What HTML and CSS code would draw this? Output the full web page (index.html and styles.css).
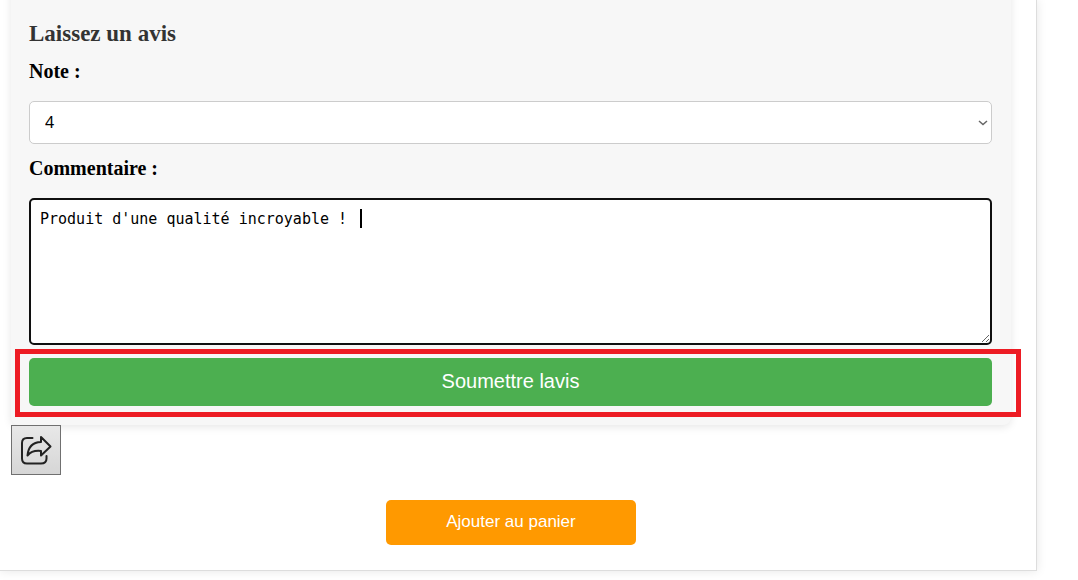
FILE: index.html
```html
<!DOCTYPE html>
<html lang="fr">
<head>
<meta charset="utf-8">
<title>Laissez un avis</title>
<link rel="stylesheet" href="styles.css">
</head>
<body>
<main class="product">
  <form class="review">
    <h2 class="review-title">Laissez un avis</h2>
    <label class="review-label" for="note">Note :</label>
    <div class="select-field">
      <select class="review-select" id="note">
        <option>1</option>
        <option>2</option>
        <option>3</option>
        <option selected>4</option>
        <option>5</option>
      </select>
      <svg class="select-arrow" viewBox="0 0 10 6" aria-hidden="true"><path d="M1 1l4 3.500 4-3.500"/></svg>
    </div>
    <label class="review-label" for="commentaire">Commentaire :</label>
    <div class="comment-field">
      <textarea class="review-comment" id="commentaire" spellcheck="false">Produit d'une qualité incroyable ! </textarea>
      <span class="caret"></span>
    </div>
    <div class="submit-field">
      <button class="submit-button" type="button">Soumettre lavis</button>
      <span class="highlight"></span>
    </div>
  </form>
  <button class="share-button" type="button" aria-label="Partager">
    <svg class="share-icon" viewBox="0 0 48 48" aria-hidden="true">
      <path d="M20.500 12H15Q10 12 10 17V32.500Q10 37.500 15 37.500H29Q34.500 37.500 34.500 32.500V30"/>
      <path d="M29 11L38.500 20.500L29 29.500V25Q20 24 15.500 29.500Q16.500 16.500 29 16Z"/>
    </svg>
  </button>
  <button class="cart-button" type="button">Ajouter au panier</button>
</main>
</body>
</html>
```
FILE: styles.css
```css
* {
  box-sizing: border-box;
}

body {
  margin: 0;
  min-height: 100vh;
  background: #fff;
  font-family: "Liberation Serif", "Times New Roman", serif;
  overflow: hidden;
}

.product {
  display: flex;
  flex-direction: column;
  margin-right: 41px;
  padding: 0 25px 25px 11px;
  border: solid #ddd;
  border-width: 0 1px 1px 0;
  box-shadow: 0 0 10px rgba(0, 0, 0, 0.1);
}

.review {
  display: flex;
  flex-direction: column;
  margin-top: -20px;
  padding: 40px 19px 19px 18px;
  background: #f7f7f7;
  border-radius: 8px;
  box-shadow: 0 2px 8px rgba(0, 0, 0, 0.1);
}

.review-title {
  margin: 0 0 12px;
  font-size: 23px;
  line-height: 28px;
  color: #333;
}

.review-label {
  margin-bottom: 18px;
  font-size: 20px;
  font-weight: bold;
  line-height: 23px;
  color: #000;
}

.select-field {
  position: relative;
  margin-bottom: 13px;
}

.review-select {
  display: block;
  width: 100%;
  height: 43px;
  padding: 0 15px 2px;
  border: 1px solid #ccc;
  border-radius: 5px;
  background: #fff;
  color: #000;
  font: 16px "Noto Sans", sans-serif;
  appearance: none;
}

.select-arrow {
  position: absolute;
  top: 19px;
  right: 4px;
  width: 10px;
  height: 6px;
  fill: none;
  stroke: #666;
  stroke-width: 1.5;
  pointer-events: none;
}

.comment-field {
  position: relative;
  margin-bottom: 13px;
}

.review-comment {
  display: block;
  width: 100%;
  height: 147px;
  padding: 9px;
  border: 2px solid #101010;
  border-radius: 5px;
  outline: none;
  background: #fff;
  color: #000;
  font: 15px/20px "DejaVu Sans Mono", monospace;
  resize: vertical;
}

.caret {
  position: absolute;
  top: 11px;
  left: 331px;
  width: 2px;
  height: 19px;
  background: #000;
}

.submit-field {
  position: relative;
}

.submit-button {
  display: block;
  width: 100%;
  height: 48px;
  padding: 0 0 2px;
  border: 0;
  border-radius: 5px;
  background: #4caf50;
  color: #fff;
  font: 20px "Liberation Sans", Arial, sans-serif;
}

.highlight {
  position: absolute;
  inset: -9px -29px -11px -14px;
  border: 5px solid #ed1c24;
  pointer-events: none;
}

.share-button {
  position: relative;
  width: 50px;
  height: 50px;
  margin-bottom: 25px;
  padding: 0;
  border: 1px solid #707070;
  background: linear-gradient(#e8e8e8, #d6d6d6);
}

.share-icon {
  display: block;
  width: 48px;
  height: 48px;
  fill: none;
  stroke: #222;
  stroke-width: 2;
  stroke-linecap: round;
  stroke-linejoin: round;
}

.cart-button {
  align-self: center;
  width: 250px;
  height: 45px;
  padding: 0 0 2px;
  border: 0;
  border-radius: 5px;
  background: #ff9900;
  color: #fff;
  font: 17px "Liberation Sans", Arial, sans-serif;
}
```
